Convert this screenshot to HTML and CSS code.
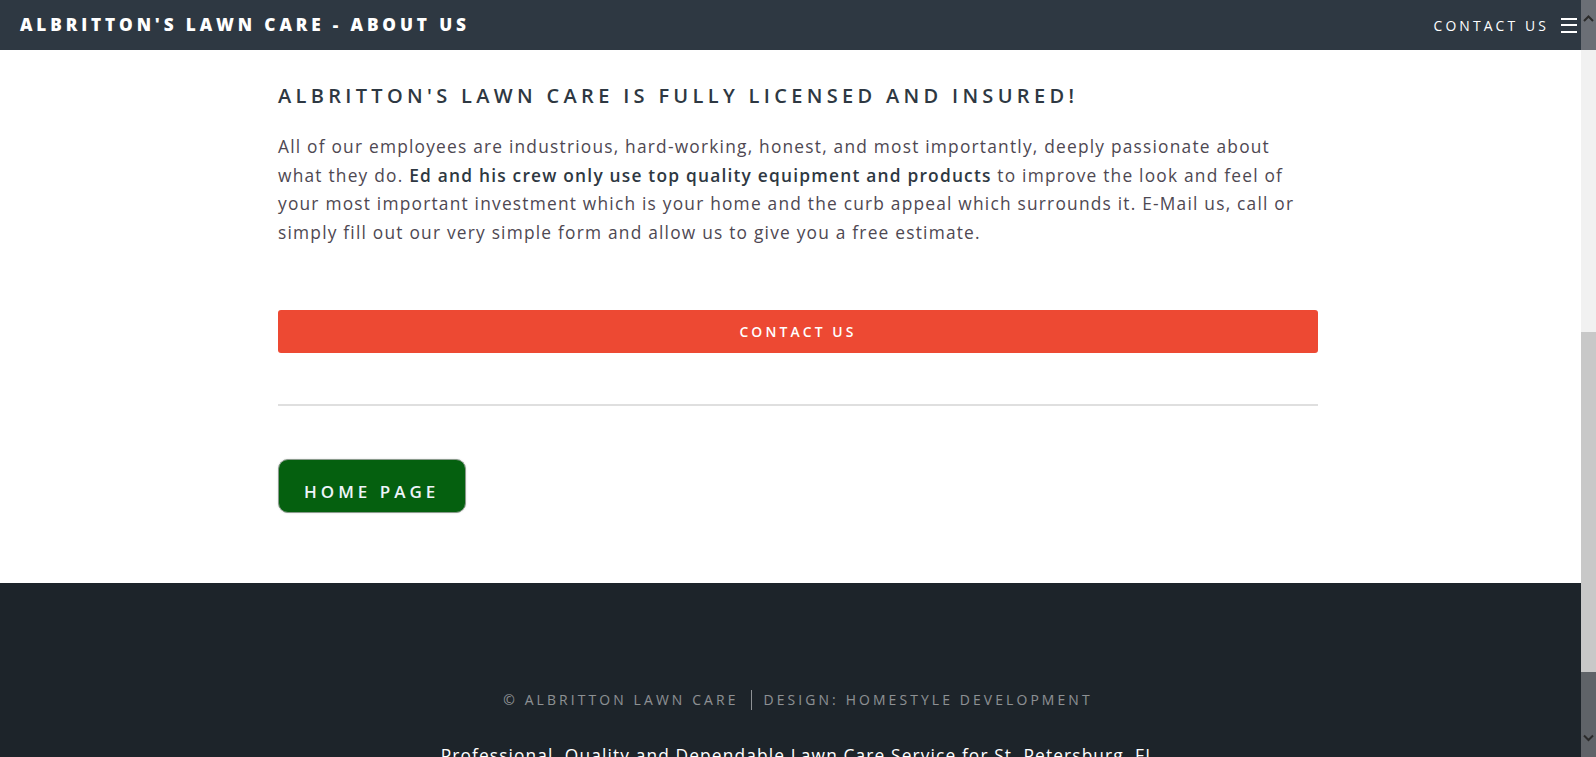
FILE: index.html
```html
<!DOCTYPE html>
<html lang="en">
<head>
<meta charset="utf-8">
<title>Albritton's Lawn Care - About Us</title>
<link rel="stylesheet" href="styles.css">
</head>
<body>
<header class="site-header">
  <h1 class="brand"><a href="#">Albritton's Lawn Care - About Us</a></h1>
  <nav class="nav">
    <a href="#" class="nav-link">Contact Us</a>
    <span class="burger"><span></span><span></span><span></span></span>
  </nav>
</header>
<main class="wrapper">
  <div class="inner">
    <h2 class="title">Albritton's Lawn Care is Fully Licensed and Insured!</h2>
    <p class="lead">All of our employees are industrious, hard-working, honest, and most importantly, deeply passionate about what they do. <strong>Ed and his crew only use top quality equipment and products</strong> to improve the look and feel of your most important investment which is your home and the curb appeal which surrounds it. E-Mail us, call or simply fill out our very simple form and allow us to give you a free estimate.</p>
    <a href="#" class="btn-primary">Contact Us</a>
    <hr class="divider">
    <a href="#" class="btn-home">Home Page</a>
  </div>
</main>
<footer class="site-footer">
  <ul class="copyright"><li>&copy; Albritton Lawn Care</li><li>Design: Homestyle Development</li></ul>
  <p class="tagline">Professional, Quality and Dependable Lawn Care Service for St. Petersburg, FL</p>
</footer>
<div class="scrollbar" aria-hidden="true">
  <div class="sb-top"><svg width="15" height="10" viewBox="0 0 15 10"><path d="M3 8 L7.5 3.5 L12 8" fill="none" stroke="#2b2b2b" stroke-width="2"/></svg></div>
  <div class="sb-track"></div>
  <div class="sb-thumb"></div>
  <div class="sb-bottom"><svg width="15" height="10" viewBox="0 0 15 10"><path d="M3 2.5 L7.5 7 L12 2.5" fill="none" stroke="#2b2b2b" stroke-width="2"/></svg></div>
</div>
</body>
</html>
```
FILE: styles.css
```css
html, body {
  margin: 0;
  padding: 0;
  height: 100%;
  overflow: hidden;
}
body {
  font-family: "Open Sans", "DejaVu Sans", sans-serif;
  font-size: 17.33px;
  color: #4e4852;
  background: #fff;
  letter-spacing: 0.07em;
}
a { text-decoration: none; }

.site-header {
  height: 50px;
  background: #2e3842;
  display: flex;
  align-items: center;
  justify-content: space-between;
  padding: 0 19px 0 20px;
}
.brand {
  margin: 0;
  font-size: 17.2px;
  font-weight: 800;
  letter-spacing: 0.225em;
  text-transform: uppercase;
  line-height: 50px;
}
.brand a { color: #fff; }
.nav {
  display: flex;
  align-items: center;
  gap: 12px;
  padding-top: 1px;
}
.nav-link {
  color: #fff;
  font-size: 13.9px;
  letter-spacing: 0.225em;
  text-transform: uppercase;
}
.burger {
  display: flex;
  flex-direction: column;
  gap: 4.5px;
  width: 16px;
  margin-top: -1px;
}
.burger span {
  display: block;
  height: 2px;
  background: #fff;
}

.wrapper {
  padding: 31px 0 70px;
}
.inner {
  width: 1040px;
  margin: 0 auto;
}
.title {
  margin: 0 0 21px;
  font-size: 20px;
  line-height: 30px;
  font-weight: 600;
  letter-spacing: 0.216em;
  text-transform: uppercase;
  color: #2e3842;
}
.lead {
  margin: 0 0 64px;
  line-height: 1.65em;
}
.lead strong {
  font-weight: 600;
  color: #2e3842;
}
.btn-primary {
  display: block;
  height: 43px;
  line-height: 43px;
  border-radius: 3px;
  background: #ed4933;
  color: #fff;
  text-align: center;
  font-size: 13.9px;
  font-weight: 600;
  letter-spacing: 0.225em;
  text-transform: uppercase;
}
.divider {
  border: 0;
  border-bottom: 2px solid #dfdfdf;
  margin: 51px 0 53px;
}
.btn-home {
  display: inline-block;
  padding: 22px 26px 10px 25px;
  line-height: 20px;
  background: #05600f;
  border: 1px solid #8a9a8c;
  border-radius: 10px;
  color: #eef4fa;
  font-size: 17px;
  font-weight: 600;
  letter-spacing: 0.235em;
  text-transform: uppercase;
  box-shadow: 0 0 2px rgba(0,0,0,0.15);
}

.site-footer {
  background: #1d242a;
  padding: 107px 0 60px;
  text-align: center;
  height: 400px;
}
.copyright {
  list-style: none;
  margin: 0;
  padding: 0;
  display: flex;
  justify-content: center;
  font-size: 13.9px;
  line-height: 20px;
  letter-spacing: 0.225em;
  text-transform: uppercase;
  color: rgba(255,255,255,0.5);
}
.copyright li + li {
  border-left: 1px solid rgba(255,255,255,0.5);
  margin-left: 12px;
  padding-left: 12px;
}
.tagline {
  margin: 31px 0 0;
  color: #fff;
  letter-spacing: 0.065em;
  line-height: 1.65em;
}

.scrollbar {
  position: fixed;
  top: 0;
  right: 0;
  width: 15px;
  height: 757px;
  display: flex;
  flex-direction: column;
}
.sb-top {
  height: 50px;
  background: #6b6f76;
  display: flex;
  justify-content: center;
  padding-top: 13px;
  box-sizing: border-box;
}
.sb-track { height: 282px; background: #f1f1f1; }
.sb-thumb { height: 340px; background: #c8c8c8; }
.sb-bottom {
  height: 85px;
  background: #5f6368;
  display: flex;
  justify-content: center;
  align-items: flex-end;
  padding-bottom: 14px;
  box-sizing: border-box;
}
.sb-top svg, .sb-bottom svg { display: block; }
```
